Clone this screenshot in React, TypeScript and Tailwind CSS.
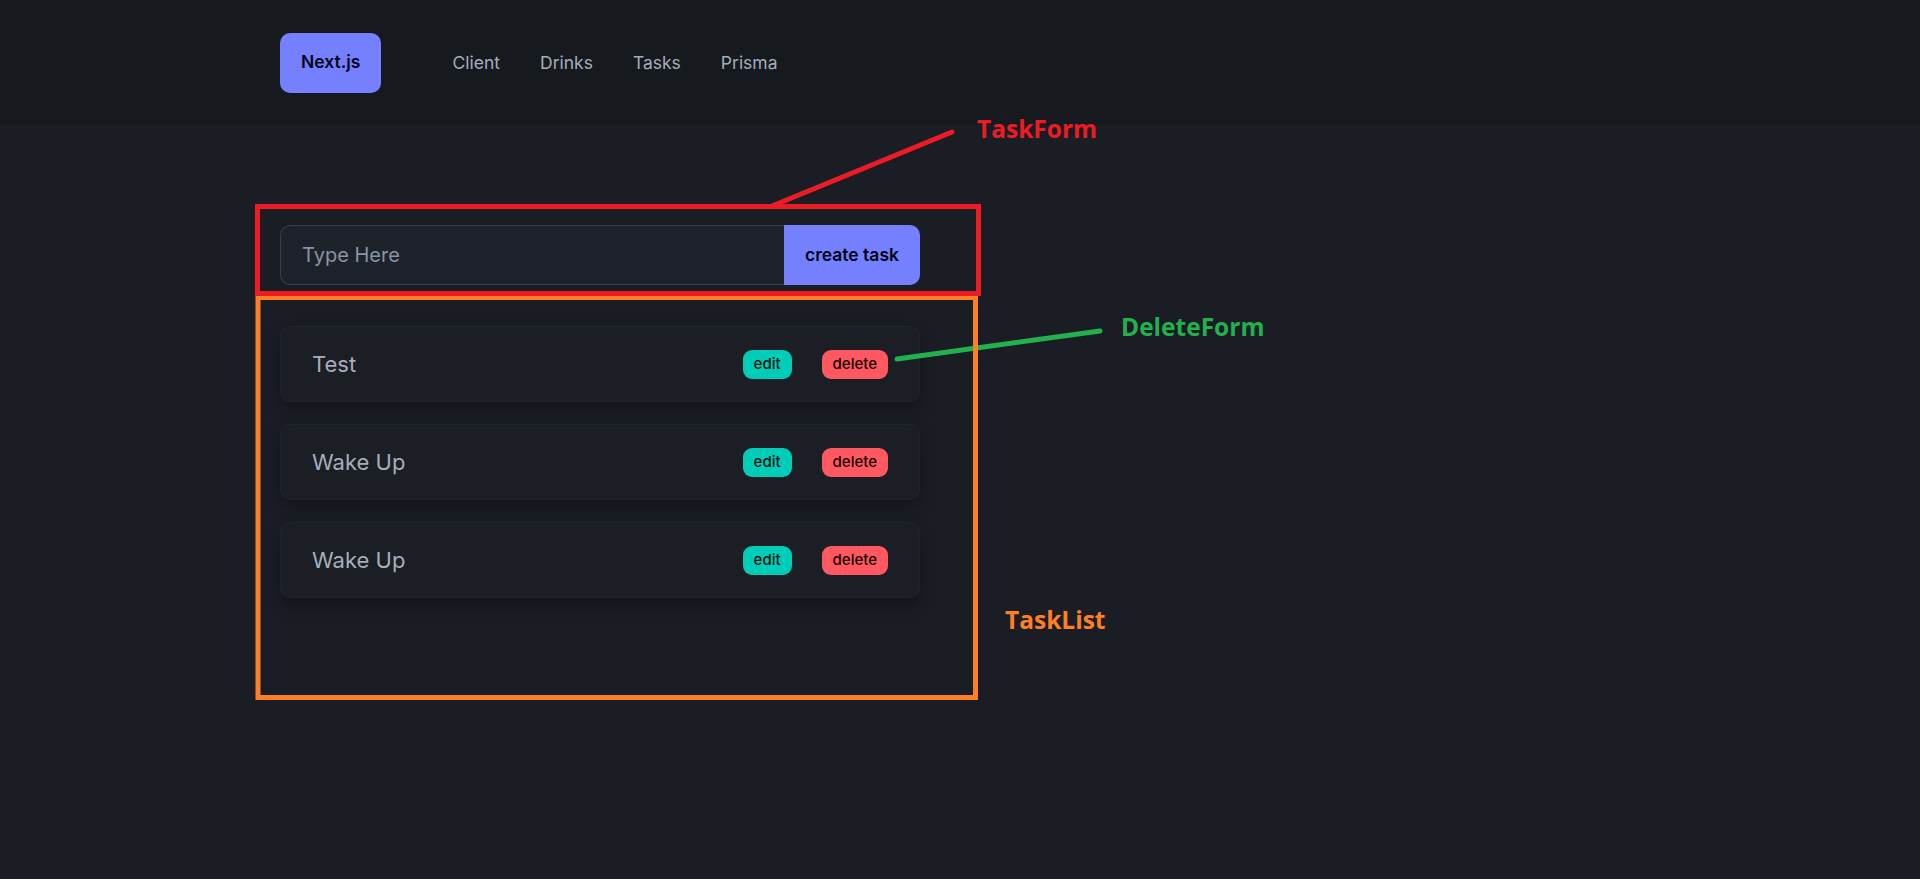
import React from 'react';

const tasks = [
  { id: 1, content: 'Test' },
  { id: 2, content: 'Wake Up' },
  { id: 3, content: 'Wake Up' },
];

function Navbar() {
  const links = ['Client', 'Drinks', 'Tasks', 'Prisma'];
  return (
    <nav className="h-[125px] bg-[#16191e]">
      <div className="mx-auto flex h-full w-[1440px] items-center px-[40px]">
        <a className="flex h-[60px] items-center rounded-[10px] bg-[#7480ff] px-[21px] text-[17.5px] font-semibold text-[#050617]">
          Next.js
        </a>
        <ul className="ml-[51px] mt-[2px] flex items-center">
          {links.map((l) => (
            <li key={l}>
              <a className="block px-[20px] py-[10px] text-[17.5px] text-[#a6adbb]">{l}</a>
            </li>
          ))}
        </ul>
      </div>
    </nav>
  );
}

function TaskForm() {
  return (
    <form className="flex h-[60px] w-[640px]">
      <input
        type="text"
        placeholder="Type Here"
        className="h-full flex-1 rounded-l-[10px] border border-r-0 border-[#383f47] bg-[#1e222a] px-[21px] text-[20px] text-[#a6adbb] outline-none placeholder:text-[#8a94a4]"
      />
      <button
        type="button"
        className="h-full w-[136px] rounded-r-[10px] bg-[#7480ff] text-[17.5px] font-semibold text-[#050617]"
      >
        create task
      </button>
    </form>
  );
}

function TaskList() {
  return (
    <ul className="mt-[41px] flex w-[640px] flex-col gap-[22px]">
      {tasks.map((t) => (
        <li
          key={t.id}
          className="flex h-[76px] items-center justify-between rounded-[10px] border border-[#20242b] bg-[#1b1e24] px-[31px] shadow-[0_8px_16px_rgba(0,0,0,0.25)]"
        >
          <h2 className="text-[22px] text-[#a6adbb]">{t.content}</h2>
          <div className="flex items-center gap-[30px]">
            <a className="flex h-[29px] items-center rounded-[9px] bg-[#00cdb7] px-[11px] text-[15px] font-medium text-[#010f0d]">
              edit
            </a>
            <button
              type="button"
              className="flex h-[29px] items-center rounded-[9px] bg-[#ff5861] px-[11px] text-[15px] font-medium text-[#160000]"
            >
              delete
            </button>
          </div>
        </li>
      ))}
    </ul>
  );
}

function Annotations() {
  return (
    <div className="pointer-events-none absolute inset-0">
      <svg className="absolute left-0 top-0" width="1920" height="879">
        <line x1="772" y1="206" x2="952" y2="132" stroke="#ed1c24" strokeWidth="5" strokeLinecap="round" />
        <line x1="897" y1="359" x2="1100" y2="331" stroke="#22b14c" strokeWidth="5" strokeLinecap="round" />
        <rect x="258" y="297.5" width="717.5" height="400" fill="none" stroke="#ff7f27" strokeWidth="5" />
        <rect x="257.5" y="206.5" width="721" height="87" fill="none" stroke="#ed1c24" strokeWidth="5" />
      </svg>
      <div className="absolute left-[977px] top-[117px] font-['Open_Sans',sans-serif] text-[24.5px] font-bold leading-none text-[#ed1c24]">
        TaskForm
      </div>
      <div className="absolute left-[1121px] top-[315px] font-['Open_Sans',sans-serif] text-[24.5px] font-bold leading-none text-[#22b14c]">
        DeleteForm
      </div>
      <div className="absolute left-[1005px] top-[608px] font-['Open_Sans',sans-serif] text-[24.5px] font-bold leading-none text-[#ff7f27]">
        TaskList
      </div>
    </div>
  );
}

export default function App() {
  return (
    <div className="relative min-h-[879px] bg-[#1a1d24] font-['Inter',sans-serif]">
      <Navbar />
      <main className="mx-auto w-[1440px] px-[40px] pt-[100px]">
        <TaskForm />
        <TaskList />
      </main>
      <Annotations />
    </div>
  );
}
